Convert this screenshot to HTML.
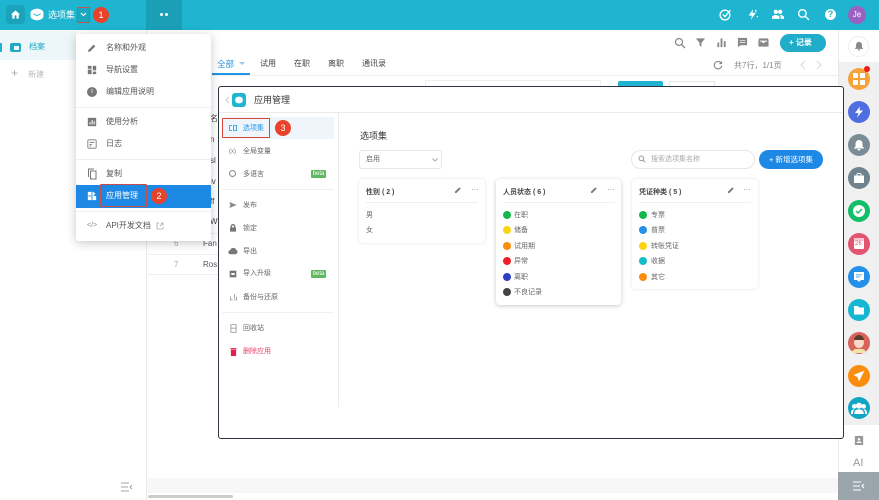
<!DOCTYPE html>
<html lang="zh"><head><meta charset="utf-8"><title>应用管理</title>
<style>
html,body{margin:0;padding:0;background:#fff}
#p{position:relative;width:879px;height:500px;overflow:hidden;background:#fff;font-family:"Liberation Sans","Noto Sans CJK SC",sans-serif;color:#444;filter:blur(.35px)}
#p div,#p span.a,#p svg{position:absolute}
.t{white-space:nowrap;line-height:12px;height:12px}
.b{width:16px;height:16px;border-radius:50%;background:#e8432a;color:#fff;font-size:9px;line-height:16px;text-align:center}
.r{border:1.5px solid #d9473a;box-sizing:border-box;border-radius:1px}
.m{font-size:8px;color:#555}
.g{font-size:7px;color:#666;margin-top:1px}
.d{width:8px;height:8px;border-radius:50%}
.c{background:#fff;border-radius:4px;box-sizing:border-box}
.ic{width:22px;height:22px;border-radius:50%;left:848px}
.beta{width:15px;height:8px;background:#5fb760;color:#fff;font-size:6px;line-height:8px;text-align:center;left:311px;border-radius:1px}
</style></head><body><div id="p">

<!-- top bar -->
<div style="left:0;top:0;width:879px;height:30px;background:#1fb4cf"></div>
<div style="left:146px;top:0;width:36px;height:30px;background:#1a9fb7"></div>
<div style="left:6px;top:5px;width:19px;height:19px;border-radius:4px;background:#1ba3bc"></div>
<svg style="left:10px;top:9px" width="11" height="11" viewBox="0 0 24 24"><path fill="#fff" d="M10 21v-7h4v7h5v-9h3L12 3 2 12h3v9z"/></svg>
<svg style="left:30px;top:7px" width="14" height="15" viewBox="0 0 24 24"><path fill="#fff" d="M12 2c4 0 11 3 11 6v8c0 3-7 6-11 6S1 19 1 16V8c0-3 7-6 11-6z"/><path fill="#1fb4cf" d="M6 10l6 3 6-3 1 1-7 4-7-4z"/></svg>
<div class="t" style="left:48px;top:9px;font-size:9px;color:#fff">选项集</div>
<div class="r" style="left:77px;top:7px;width:13px;height:16px;border-color:#c4564e;background:#1ba7c0"></div>
<svg style="left:80px;top:12px" width="7" height="5" viewBox="0 0 7 5"><path d="M1 1l2.5 2.5L6 1" stroke="#fff" stroke-width="1.2" fill="none"/></svg>
<div class="b" style="left:93px;top:7px">1</div>
<div style="left:160px;top:13px;width:3px;height:3px;border-radius:50%;background:#fff"></div>
<div style="left:165px;top:13px;width:3px;height:3px;border-radius:50%;background:#fff"></div>

<svg style="left:719px;top:8px" width="13" height="13" viewBox="0 0 24 24" fill="none" stroke="#fff" stroke-width="2.4"><circle cx="11" cy="13" r="9"/><path d="M7 12l4 4 10-12"/></svg>
<svg style="left:746px;top:8px" width="13" height="13" viewBox="0 0 24 24"><path fill="#fff" d="M13 2L5 14h6l-2 8 9-13h-6z"/><path stroke="#fff" stroke-width="2" d="M18 3v5M20 15l2 2"/></svg>
<svg style="left:771px;top:8px" width="14" height="13" viewBox="0 0 24 24"><path fill="#fff" d="M8 11a4 4 0 100-8 4 4 0 000 8zm8 0a4 4 0 100-8 4 4 0 000 8zM8 13c-3 0-7 1.500-7 4v3h14v-3c0-2.500-4-4-7-4zm8 0h-1c1.500 1 2 2.500 2 4v3h6v-3c0-2.500-4-4-7-4z"/></svg>
<svg style="left:797px;top:8px" width="13" height="13" viewBox="0 0 24 24" fill="none" stroke="#fff" stroke-width="2.600"><circle cx="10" cy="10" r="7"/><path d="M15 15l7 7"/></svg>
<div style="left:825px;top:9px;width:11px;height:11px;border-radius:50%;background:#fff;color:#1fb4cf;font-size:9px;line-height:11px;text-align:center;font-weight:bold">?</div>
<div style="left:848px;top:6px;width:18px;height:18px;border-radius:50%;background:#9a62c0;color:#fff;font-size:8px;line-height:18px;text-align:center">Je</div>

<!-- left sidebar -->
<div style="left:0;top:31px;width:76px;height:29px;background:#edf7fa"></div>
<div style="left:0;top:43px;width:2px;height:9px;background:#1fb4cf"></div>
<div style="left:10px;top:43px;width:11px;height:9px;border-radius:2px;background:#1fa9c4"></div>
<div style="left:14px;top:46px;width:5px;height:4px;background:#edf7fa"></div>
<div class="t" style="left:29px;top:41px;font-size:8px;color:#1fa9c4">档案</div>
<div class="t" style="left:11px;top:67px;font-size:12px;color:#aaa">+</div>
<div class="t" style="left:28px;top:69px;font-size:8px;color:#bbb">新建</div>
<svg style="left:121px;top:482px" width="12" height="10" viewBox="0 0 12 10" fill="none" stroke="#888" stroke-width=".8"><path d="M0 1h8M0 5h7M0 9h8M11 3L9 5l2 2"/></svg>

<!-- main -->
<div style="left:146px;top:30px;width:1px;height:470px;background:#eaeaea"></div>
<div style="left:146px;top:75px;width:692px;height:1px;background:#eee"></div>
<div class="t" style="left:217px;top:58px;font-size:8.500px;color:#2196e3">全部</div>
<div style="left:239px;top:62px;width:0;height:0;border:3px solid transparent;border-top:3px solid #9cc8e8"></div>
<div style="left:212px;top:73px;width:38px;height:2px;background:#2196e3"></div>
<div class="t m" style="left:260px;top:58px;color:#444">试用</div>
<div class="t m" style="left:294px;top:58px;color:#444">在职</div>
<div class="t m" style="left:328px;top:58px;color:#444">离职</div>
<div class="t m" style="left:362px;top:58px;color:#444">通讯录</div>

<svg style="left:674px;top:37px" width="12" height="12" viewBox="0 0 24 24" fill="none" stroke="#888" stroke-width="2.500"><circle cx="10" cy="10" r="7"/><path d="M15 15l7 7"/></svg>
<svg style="left:695px;top:37px" width="11" height="11" viewBox="0 0 24 24"><path fill="#888" d="M2 3h20l-8 10v8l-4-2v-6z"/></svg>
<svg style="left:716px;top:37px" width="11" height="11" viewBox="0 0 24 24"><path fill="#888" d="M3 12h4v10H3zM10 3h4v19h-4zM17 9h4v13h-4z"/></svg>
<svg style="left:737px;top:37px" width="11" height="11" viewBox="0 0 24 24"><path fill="#888" d="M2 2h20v16h-14l-6 4z"/><path fill="#fff" d="M6 7h12v1.500H6zM6 11h12v1.500H6z"/></svg>
<svg style="left:758px;top:37px" width="11" height="11" viewBox="0 0 24 24"><path fill="#888" d="M3 3h18l2 3v15H1V6z"/><path fill="#fff" d="M4 10h5l1 3h4l1-3h5v-2H4z"/></svg>
<div style="left:780px;top:34px;width:46px;height:18px;border-radius:9px;background:#1fadc9"></div>
<div class="t" style="left:789px;top:37px;font-size:8px;color:#fff;font-weight:bold">+ 记录</div>

<svg style="left:713px;top:60px" width="10" height="10" viewBox="0 0 24 24" fill="none" stroke="#888" stroke-width="2.600"><path d="M20 8a9 9 0 10 1 6"/><path fill="#888" stroke="none" d="M22 2v8h-8z"/></svg>
<div class="t" style="left:734px;top:59px;font-size:8px;color:#888;margin-top:1px">共7行，1/1页</div>
<svg style="left:800px;top:60px" width="24" height="10" viewBox="0 0 24 10" fill="none" stroke="#ddd" stroke-width="1.200"><path d="M5 1L1 5l4 4M17 1l4 4-4 4"/></svg>

<!-- behind modal -->
<div style="left:425px;top:80px;width:176px;height:7px;border:1px solid #eee;box-sizing:border-box"></div>
<div style="left:618px;top:81px;width:45px;height:6px;background:#1fb4cf;border-radius:2px 2px 0 0"></div>
<div style="left:669px;top:81px;width:46px;height:6px;border:1px solid #e6e6e6;box-sizing:border-box"></div>
<div class="t" style="left:210px;top:113px;font-size:8px;color:#444">名</div>
<div class="t" style="left:210px;top:134px;font-size:8px;color:#444">n</div>
<div class="t" style="left:210px;top:155px;font-size:8px;color:#444">sl</div>
<div class="t" style="left:210px;top:176px;font-size:8px;color:#444">iv</div>
<div class="t" style="left:210px;top:196px;font-size:8px;color:#444">ff</div>
<div class="t" style="left:210px;top:216px;font-size:8px;color:#444">W</div>
<div style="left:147px;top:233px;width:71px;height:1px;background:#f0f0f0"></div>
<div style="left:147px;top:254px;width:71px;height:1px;background:#eee"></div>
<div style="left:147px;top:274px;width:71px;height:1px;background:#eee"></div>
<div class="t" style="left:174px;top:238px;font-size:8px;color:#aaa">6</div>
<div class="t" style="left:174px;top:259px;font-size:8px;color:#aaa">7</div>
<div class="t" style="left:203px;top:238px;font-size:8px;color:#555">Fan</div>
<div class="t" style="left:203px;top:259px;font-size:8px;color:#555">Ros</div>
<div style="left:147px;top:478px;width:691px;height:15px;background:#f7f7f7"></div>
<div style="left:148px;top:495px;width:85px;height:3px;border-radius:2px;background:#ccc"></div>

<!-- menu -->
<div style="left:76px;top:34px;width:135px;height:207px;background:#fff;border-radius:3px;box-shadow:0 2px 10px rgba(0,0,0,.22)"></div>
<svg style="left:87px;top:43px" width="10" height="10" viewBox="0 0 24 24"><path fill="#777" d="M3 17v4h4L20 8l-4-4z"/></svg>
<div class="t m" style="left:106px;top:42px">名称和外观</div>
<svg style="left:87px;top:65px" width="10" height="10" viewBox="0 0 24 24"><path fill="#777" d="M2 2h9v7H2zM2 11h9v11H2zM14 2h8v11h-8zM14 16h8v6h-8z"/></svg>
<div class="t m" style="left:106px;top:64px">导航设置</div>
<div style="left:87px;top:87px;width:10px;height:10px;border-radius:50%;background:#777;color:#fff;font-size:7px;line-height:10px;text-align:center">i</div>
<div class="t m" style="left:106px;top:86px">编辑应用说明</div>
<div style="left:76px;top:107px;width:135px;height:1px;background:#eee"></div>
<svg style="left:87px;top:117px" width="10" height="10" viewBox="0 0 24 24"><path fill="#777" d="M2 2h20v20H2z"/><path fill="#fff" d="M6 12h2.500v6H6zM11 7h2.500v11H11zM16 10h2.500v8H16z"/></svg>
<div class="t m" style="left:106px;top:116px">使用分析</div>
<svg style="left:87px;top:139px" width="10" height="10" viewBox="0 0 24 24" fill="none" stroke="#777" stroke-width="2"><rect x="2" y="2" width="20" height="20" rx="2"/><path d="M6 8h12M6 13h6M6 17h4"/></svg>
<div class="t m" style="left:106px;top:138px">日志</div>
<div style="left:76px;top:159px;width:135px;height:1px;background:#eee"></div>
<svg style="left:87px;top:168px" width="10" height="12" viewBox="0 0 20 24" fill="none" stroke="#777" stroke-width="2"><path d="M3 18V2h11"/><rect x="7" y="6" width="11" height="16"/></svg>
<div class="t m" style="left:106px;top:168px">复制</div>
<div style="left:76px;top:185px;width:135px;height:23px;background:#1e88e5"></div>
<svg style="left:87px;top:191px" width="10" height="10" viewBox="0 0 24 24"><path fill="#fff" d="M2 2h9v9H2zM13 1l7 5-5 6h7v10h-9zM2 13h9v9H2z"/></svg>
<div class="t" style="left:106px;top:190px;font-size:8px;color:#fff">应用管理</div>
<div class="r" style="left:100px;top:184px;width:47px;height:23px;border-color:#c4504a"></div>
<div class="b" style="left:151px;top:188px">2</div>
<div style="left:76px;top:211px;width:135px;height:1px;background:#eee"></div>
<div class="t" style="left:87px;top:220px;font-size:7px;color:#888">&lt;/&gt;</div>
<div class="t m" style="left:106px;top:220px">API开发文档</div>
<svg style="left:156px;top:222px" width="8" height="8" viewBox="0 0 24 24" fill="none" stroke="#aaa" stroke-width="2.500"><path d="M10 3H3v18h18v-7M14 3h7v7M21 3L11 13"/></svg>

<!-- right rail -->
<div style="left:838px;top:30px;width:41px;height:32px;background:#fff"></div>
<div style="left:838px;top:62px;width:41px;height:363px;background:#f0f0f0"></div>
<div style="left:838px;top:30px;width:1px;height:442px;background:#e8e8e8"></div>
<div style="left:848px;top:36px;width:21px;height:21px;border-radius:50%;background:#fff;border:1px solid #eee;box-sizing:border-box"></div>
<svg style="left:854px;top:41px" width="10" height="10" viewBox="0 0 24 24"><path fill="#888" d="M12 2a7 7 0 00-7 7v6l-3 3v1h20v-1l-3-3V9a7 7 0 00-7-7zM9 20a3 3 0 006 0z"/></svg>
<div class="ic" style="top:68px;background:#f5a23b"></div>
<svg style="left:853px;top:73px" width="12" height="12" viewBox="0 0 12 12"><path fill="#fff" d="M0 0h5v5H0zM7 0h5v5H7zM0 7h5v5H0zM7 7h5v5H7z"/></svg>
<div style="left:864px;top:66px;width:6px;height:6px;border-radius:50%;background:#f01a1a"></div>
<div class="ic" style="top:101px;background:#4f6fe0"></div>
<svg style="left:853px;top:106px" width="12" height="12" viewBox="0 0 24 24"><path fill="#fff" d="M14 1L4 14h7l-3 9 12-14h-7z"/></svg>
<div class="ic" style="top:134px;background:#7b8c97"></div>
<svg style="left:853px;top:139px" width="12" height="12" viewBox="0 0 24 24"><path fill="#fff" d="M12 2a7 7 0 00-7 7v6l-3 3v1h20v-1l-3-3V9a7 7 0 00-7-7zM9 20a3 3 0 006 0z"/></svg>
<div class="ic" style="top:167px;background:#6f828e"></div>
<svg style="left:853px;top:172px" width="12" height="12" viewBox="0 0 24 24"><path fill="#fff" d="M9 2h6l2 2v3h5v15H2V7h5V4zM9 4v3h6V4z"/></svg>
<div class="ic" style="top:200px;background:#12bd6a"></div>
<div style="left:853px;top:205px;width:12px;height:12px;border-radius:50%;background:#fff"></div>
<svg style="left:855px;top:208px" width="8" height="6" viewBox="0 0 8 6"><path d="M1 3l2 2 4-4" stroke="#12bd6a" stroke-width="1.400" fill="none"/></svg>
<div class="ic" style="top:233px;background:#e25470"></div>
<div style="left:854px;top:238px;width:10px;height:11px;background:#fff;border-radius:1px"></div>
<div style="left:854px;top:238px;width:10px;height:3px;background:#f7c5cf"></div>
<div class="t" style="left:855px;top:238px;font-size:6px;color:#e25470">26</div>
<div class="ic" style="top:266px;background:#2490ea"></div>
<svg style="left:853px;top:271px" width="12" height="12" viewBox="0 0 24 24"><path fill="#fff" d="M2 2h20v16h-6l-4 4-4-4H2z"/><path fill="#2490ea" d="M6 7h12v1.500H6zM6 11h8v1.500H6z"/></svg>
<div class="ic" style="top:299px;background:#14b6d2"></div>
<svg style="left:853px;top:304px" width="12" height="12" viewBox="0 0 24 24"><path fill="#fff" d="M2 4h8l2 3h10v14H2z"/></svg>
<div class="ic" style="top:332px;background:#d9635c"></div>
<div style="left:854px;top:337px;width:10px;height:11px;border-radius:50%;background:#f6d9c6"></div>
<div style="left:854px;top:335px;width:10px;height:5px;border-radius:5px 5px 0 0;background:#5a3b2e"></div>
<div style="left:852px;top:349px;width:14px;height:4px;border-radius:5px 5px 0 0;background:#f3e3a8"></div>
<div class="ic" style="top:365px;background:#fb8c0e"></div>
<svg style="left:853px;top:370px" width="12" height="12" viewBox="0 0 24 24"><path fill="#fff" d="M23 1L1 10l8 4 3 9z"/></svg>
<div class="ic" style="top:397px;background:#12a6c4"></div>
<svg style="left:851px;top:402px" width="16" height="12" viewBox="0 0 24 18"><path fill="#fff" d="M12 1a4.500 4.500 0 110 9 4.500 4.500 0 010-9zM5 3a3.500 3.500 0 110 7 3.500 3.500 0 010-7zm14 0a3.500 3.500 0 110 7 3.500 3.500 0 010-7zM12 11c4 0 7 2 7 5v2H5v-2c0-3 3-5 7-5zM4 11c.7 0 1 0 1.500.2C4 12.500 3 14 3 16v2H0v-3c0-2 2-4 4-4zm16 0c2 0 4 2 4 4v3h-3v-2c0-2-1-3.500-2.500-4.800.5-.2.800-.2 1.500-.2z"/></svg>
<svg style="left:854px;top:435px" width="10" height="11" viewBox="0 0 24 24"><path fill="#999" d="M2 1h20v22H2z"/><path fill="#fff" d="M12 6a3 3 0 110 6 3 3 0 010-6zM6 18c0-3 3-4 6-4s6 1 6 4z"/></svg>
<div class="t" style="left:853px;top:457px;font-size:11px;color:#999">AI</div>
<div style="left:838px;top:472px;width:41px;height:28px;background:#9aa6ac"></div>
<svg style="left:853px;top:481px" width="12" height="10" viewBox="0 0 12 10" fill="none" stroke="#fff" stroke-width="1"><path d="M0 1h8M0 5h7M0 9h8M11 3L9 5l2 2"/></svg>

<!-- modal -->
<div style="left:217.500px;top:85.500px;width:626px;height:353px;box-sizing:border-box;background:#fff;border:1.500px solid #2c3540;border-radius:3px"></div>
<div style="left:219px;top:112px;width:623px;height:1px;background:#eaeaea"></div>
<div style="left:338px;top:113px;width:1px;height:294px;background:#eaeaea"></div>
<svg style="left:225px;top:96px" width="5" height="8" viewBox="0 0 5 8"><path d="M4 1L1 4l3 3" stroke="#ccc" fill="none"/></svg>
<div style="left:232px;top:93px;width:14px;height:14px;border-radius:3px;background:#1fb4cf"></div>
<svg style="left:235px;top:96px" width="8" height="8" viewBox="0 0 24 24"><path fill="#fff" d="M12 2c4 0 11 3 11 6v8c0 3-7 6-11 6S1 19 1 16V8c0-3 7-6 11-6z"/></svg>
<div class="t" style="left:254px;top:94px;font-size:9px;color:#333">应用管理</div>

<div style="left:222px;top:117px;width:112px;height:22px;background:#eef6fc;border-radius:2px"></div>
<div class="r" style="left:222px;top:118px;width:48px;height:20px"></div>
<svg style="left:229px;top:125px" width="8" height="6" viewBox="0 0 8 6" fill="none" stroke="#2196e3" stroke-width=".8"><path d="M3 .5H.5v5H3M4.500 .5h3v5h-3z"/></svg>
<div class="t g" style="left:243px;top:122px;color:#2196e3">选项集</div>
<div class="b" style="left:275px;top:120px">3</div>
<div class="t" style="left:229px;top:146px;font-size:6px;color:#777">(x)</div>
<div class="t g" style="left:243px;top:145px">全局变量</div>
<div style="left:229px;top:170px;width:7px;height:7px;border:1px solid #888;border-radius:50%;box-sizing:border-box"></div>
<div class="t g" style="left:243px;top:168px">多语言</div>
<div class="beta" style="top:170px">beta</div>
<div style="left:222px;top:189px;width:112px;height:1px;background:#f0f0f0"></div>
<svg style="left:229px;top:201px" width="8" height="8" viewBox="0 0 24 24"><path fill="#888" d="M1 3l22 9-22 9 3-9z"/></svg>
<div class="t g" style="left:243px;top:199px">发布</div>
<svg style="left:229px;top:224px" width="8" height="8" viewBox="0 0 24 24"><path fill="#777" d="M5 10V7a7 7 0 0114 0v3h2v13H3V10zm4 0h6V7a3 3 0 00-6 0z"/></svg>
<div class="t g" style="left:243px;top:222px">锁定</div>
<svg style="left:228px;top:247px" width="10" height="8" viewBox="0 0 24 20"><path fill="#777" d="M6 18a5 5 0 01-1-10 8 8 0 0115-1 6 6 0 01-1 11z"/></svg>
<div class="t g" style="left:243px;top:245px">导出</div>
<svg style="left:229px;top:270px" width="8" height="8" viewBox="0 0 24 24"><path fill="#777" d="M2 2h20v20H2z"/><path fill="#fff" d="M7 9h10v6H7z"/></svg>
<div class="t g" style="left:243px;top:267px">导入升级</div>
<div class="beta" style="top:270px">beta</div>
<svg style="left:229px;top:293px" width="9" height="8" viewBox="0 0 24 22" fill="none" stroke="#888" stroke-width="2"><path d="M4 10v9h6M15 3v12M20 10v9h-6"/></svg>
<div class="t g" style="left:243px;top:291px">备份与还原</div>
<div style="left:222px;top:312px;width:112px;height:1px;background:#f0f0f0"></div>
<svg style="left:230px;top:324px" width="7" height="9" viewBox="0 0 18 24" fill="none" stroke="#888" stroke-width="2"><rect x="2" y="2" width="14" height="20"/><path d="M2 11h14"/></svg>
<div class="t g" style="left:243px;top:322px">回收站</div>
<svg style="left:230px;top:347px" width="7" height="9" viewBox="0 0 18 24"><path fill="#e0234e" d="M1 3h16v3H1zM2 7h14v17H2z"/></svg>
<div class="t g" style="left:243px;top:345px;color:#e8436a">删除应用</div>

<div class="t" style="left:360px;top:130px;font-size:9px;color:#333">选项集</div>
<div style="left:359px;top:150px;width:83px;height:19px;border:1px solid #e6e6e6;border-radius:3px;box-sizing:border-box"></div>
<div class="t g" style="left:366px;top:153px">启用</div>
<svg style="left:432px;top:158px" width="6" height="4" viewBox="0 0 6 4"><path d="M.5 .5L3 3 5.500 .5" stroke="#aaa" fill="none"/></svg>
<div style="left:631px;top:150px;width:124px;height:19px;border:1px solid #e6e6e6;border-radius:10px;box-sizing:border-box"></div>
<svg style="left:638px;top:155px" width="8" height="8" viewBox="0 0 24 24" fill="none" stroke="#999" stroke-width="3"><circle cx="10" cy="10" r="7"/><path d="M15 15l7 7"/></svg>
<div class="t g" style="left:651px;top:153px;color:#aaa">搜索选项集名称</div>
<div style="left:759px;top:150px;width:64px;height:19px;border-radius:10px;background:#1e88e5"></div>
<div class="t" style="left:769px;top:154px;font-size:7.500px;color:#fff">+ 新增选项集</div>

<!-- card 1 -->
<div class="c" style="left:359px;top:179px;width:126px;height:64px;box-shadow:0 0 3px rgba(0,0,0,.12)"></div>
<div class="t" style="left:366px;top:187px;font-size:7px;font-weight:bold;color:#444">性别 ( 2 )</div>
<div style="left:366px;top:202px;width:112px;height:1px;background:#f0f0f0"></div>
<div class="t g" style="left:366px;top:209px">男</div>
<div class="t g" style="left:366px;top:224px">女</div>
<svg style="left:454px;top:186px" width="8" height="8" viewBox="0 0 24 24"><path fill="#777" d="M3 17v4h4L20 8l-4-4z"/></svg>
<div class="t" style="left:471px;top:184px;font-size:8px;color:#888">···</div>

<!-- card 2 -->
<div class="c" style="left:496px;top:179px;width:125px;height:126px;box-shadow:0 1px 5px rgba(0,0,0,.22)"></div>
<div class="t" style="left:503px;top:187px;font-size:7px;font-weight:bold;color:#444">人员状态 ( 6 )</div>
<div style="left:503px;top:202px;width:112px;height:1px;background:#f0f0f0"></div>
<svg style="left:590px;top:186px" width="8" height="8" viewBox="0 0 24 24"><path fill="#777" d="M3 17v4h4L20 8l-4-4z"/></svg>
<div class="t" style="left:607px;top:184px;font-size:8px;color:#888">···</div>
<div class="d" style="left:503px;top:211px;background:#12b84a"></div><div class="t g" style="left:514px;top:209px">在职</div>
<div class="d" style="left:503px;top:226px;background:#fbd313"></div><div class="t g" style="left:514px;top:224px">储备</div>
<div class="d" style="left:503px;top:242px;background:#fb8c0e"></div><div class="t g" style="left:514px;top:240px">试用期</div>
<div class="d" style="left:503px;top:257px;background:#f0202a"></div><div class="t g" style="left:514px;top:255px">异常</div>
<div class="d" style="left:503px;top:273px;background:#2d3fc4"></div><div class="t g" style="left:514px;top:271px">离职</div>
<div class="d" style="left:503px;top:288px;background:#444"></div><div class="t g" style="left:514px;top:286px">不良记录</div>

<!-- card 3 -->
<div class="c" style="left:632px;top:179px;width:126px;height:110px;box-shadow:0 0 3px rgba(0,0,0,.12)"></div>
<div class="t" style="left:639px;top:187px;font-size:7px;font-weight:bold;color:#444">凭证种类 ( 5 )</div>
<div style="left:639px;top:202px;width:112px;height:1px;background:#f0f0f0"></div>
<svg style="left:727px;top:186px" width="8" height="8" viewBox="0 0 24 24"><path fill="#777" d="M3 17v4h4L20 8l-4-4z"/></svg>
<div class="t" style="left:743px;top:184px;font-size:8px;color:#888">···</div>
<div class="d" style="left:639px;top:211px;background:#12b84a"></div><div class="t g" style="left:651px;top:209px">专票</div>
<div class="d" style="left:639px;top:226px;background:#2490ea"></div><div class="t g" style="left:651px;top:224px">普票</div>
<div class="d" style="left:639px;top:242px;background:#fbd313"></div><div class="t g" style="left:651px;top:240px">转账凭证</div>
<div class="d" style="left:639px;top:257px;background:#14bcc8"></div><div class="t g" style="left:651px;top:255px">收据</div>
<div class="d" style="left:639px;top:273px;background:#fb8c0e"></div><div class="t g" style="left:651px;top:271px">其它</div>

</div></body></html>
